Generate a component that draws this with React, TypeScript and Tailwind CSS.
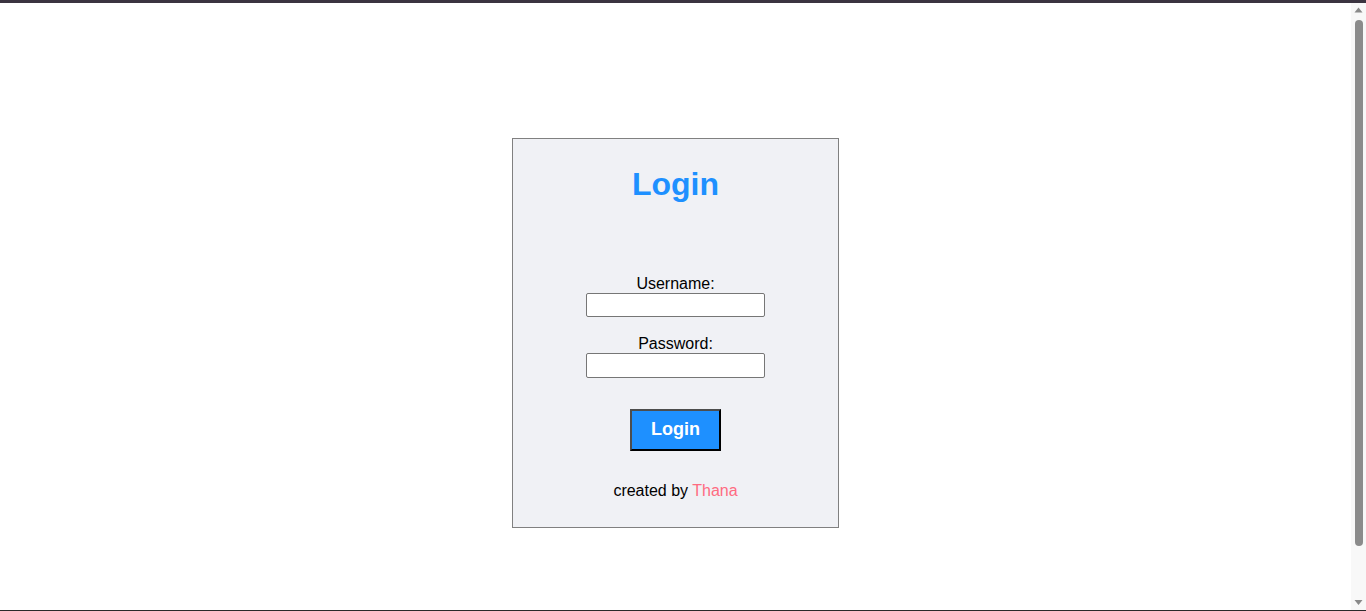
import React from "react";

function Scrollbar() {
  return (
    <div className="w-[15px] bg-[#f8f8f8] flex flex-col items-center">
      <svg width="15" height="15" viewBox="0 0 15 15" className="shrink-0">
        <path d="M3.5 9.5 L7.5 4.5 L11.5 9.5 Z" fill="#8a8a8a" />
      </svg>
      <div className="mt-[2px] w-[8px] h-[526px] rounded-full bg-[#8b8b8b]" />
      <div className="flex-1" />
      <svg width="15" height="15" viewBox="0 0 15 15" className="shrink-0">
        <path d="M3.5 5 L11.5 5 L7.5 10 Z" fill="#8a8a8a" />
      </svg>
    </div>
  );
}

export default function App() {
  return (
    <div className="h-[611px] flex flex-col overflow-hidden bg-white font-['Liberation_Sans',Arial,sans-serif] text-black">
      <div className="h-[3px] shrink-0 bg-[#3b3440]" />
      <div className="flex-1 flex min-h-0">
        <main className="flex-1 flex justify-center pt-[135px]">
          <div className="w-[327px] h-[390px] border border-[#808080] bg-[#f0f1f5] flex flex-col items-center pt-[27px]">
            <h1 className="text-[32px] leading-[36px] font-bold text-[#1e90ff]">Login</h1>
            <div className="mt-[73px] flex flex-col items-center">
              <label className="text-[16px] leading-[18px]">Username:</label>
              <input
                type="text"
                className="w-[179px] h-[24px] bg-white border border-[#767676] rounded-[2px] outline-none"
              />
              <label className="mt-[18px] text-[16px] leading-[18px]">Password:</label>
              <input
                type="password"
                className="w-[179px] h-[25px] bg-white border border-[#767676] rounded-[2px] outline-none"
              />
              <button className="mt-[31px] w-[91px] h-[42px] pb-[3px] bg-[#1e90ff] text-white font-bold text-[18px] leading-[20px] border-2 border-t-[#4d4d4d] border-l-[#4d4d4d] border-r-black border-b-black">
                Login
              </button>
              <p className="mt-[31px] text-[16px] leading-[18px]">
                created by <span className="text-[#ff6b81]">Thana</span>
              </p>
            </div>
          </div>
        </main>
        <Scrollbar />
      </div>
      <div className="h-px shrink-0 bg-[#2a2a2a]" />
    </div>
  );
}
